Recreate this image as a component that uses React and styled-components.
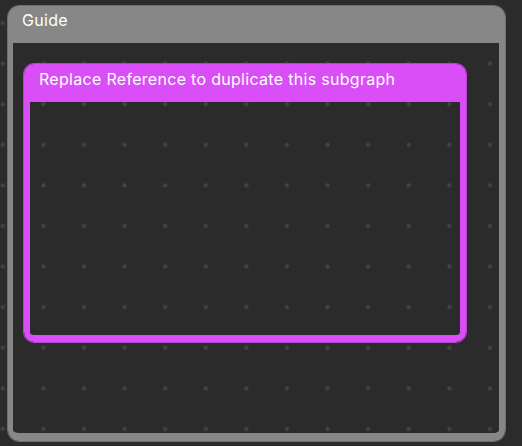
import React from "react";
import styled, { createGlobalStyle } from "styled-components";

const Global = createGlobalStyle`
  html, body { margin: 0; padding: 0; }
  body {
    width: 522px;
    height: 446px;
    overflow: hidden;
    background-color: #2b2b2b;
    background-image: radial-gradient(circle at center, #444444 0, #424242 1.6px, rgba(43,43,43,0) 2.6px);
    background-size: 40.6px 40.6px;
    background-position: -17.5px 2.7px;
    font-family: Inter, "Noto Sans", "Liberation Sans", sans-serif;
  }
`;

const Canvas = styled.div`
  display: flex;
  padding: 5px 0 0 7px;
`;

const Frame = styled.section`
  box-sizing: border-box;
  width: ${(p) => p.$w}px;
  height: ${(p) => p.$h}px;
  border: 1px solid ${(p) => p.$edge};
  border-radius: ${(p) => p.$radius}px;
  overflow: hidden;
  display: flex;
  flex-direction: column;
`;

const Header = styled.header`
  flex: none;
  height: ${(p) => p.$h}px;
  box-sizing: border-box;
  background: ${(p) => p.$fill};
  color: #ffffff;
  font-size: 16px;
  letter-spacing: 0.3px;
  line-height: 19px;
  padding: ${(p) => p.$pt}px 0 0 ${(p) => p.$pl}px;
  white-space: nowrap;
`;

const Body = styled.div`
  flex: 1;
  box-sizing: border-box;
  border-style: solid;
  border-color: ${(p) => p.$fill};
  border-width: 0 ${(p) => p.$r}px ${(p) => p.$b}px ${(p) => p.$l}px;
  border-radius: 0 0 ${(p) => p.$radius}px ${(p) => p.$radius}px;
  display: flex;
  align-items: flex-start;
  padding: ${(p) => p.$pad || "0"};
`;

export default function App() {
  return (
    <>
      <Global />
      <Canvas>
        <Frame $w={499} $h={437} $edge="#6e6e6e" $radius={12}>
          <Header $h={37} $fill="#878787" $pt={5} $pl={14}>
            Guide
          </Header>
          <Body $fill="#878787" $l={5} $r={6} $b={8} $radius={11} $pad="20px 0 0 10px">
            <Frame $w={444} $h={280} $edge="#b640d2" $radius={11}>
              <Header $h={38} $fill="#d94ef6" $pt={6} $pl={15}>
                Replace Reference to duplicate this subgraph
              </Header>
              <Body $fill="#d94ef6" $l={6} $r={6} $b={7} $radius={10} />
            </Frame>
          </Body>
        </Frame>
      </Canvas>
    </>
  );
}
